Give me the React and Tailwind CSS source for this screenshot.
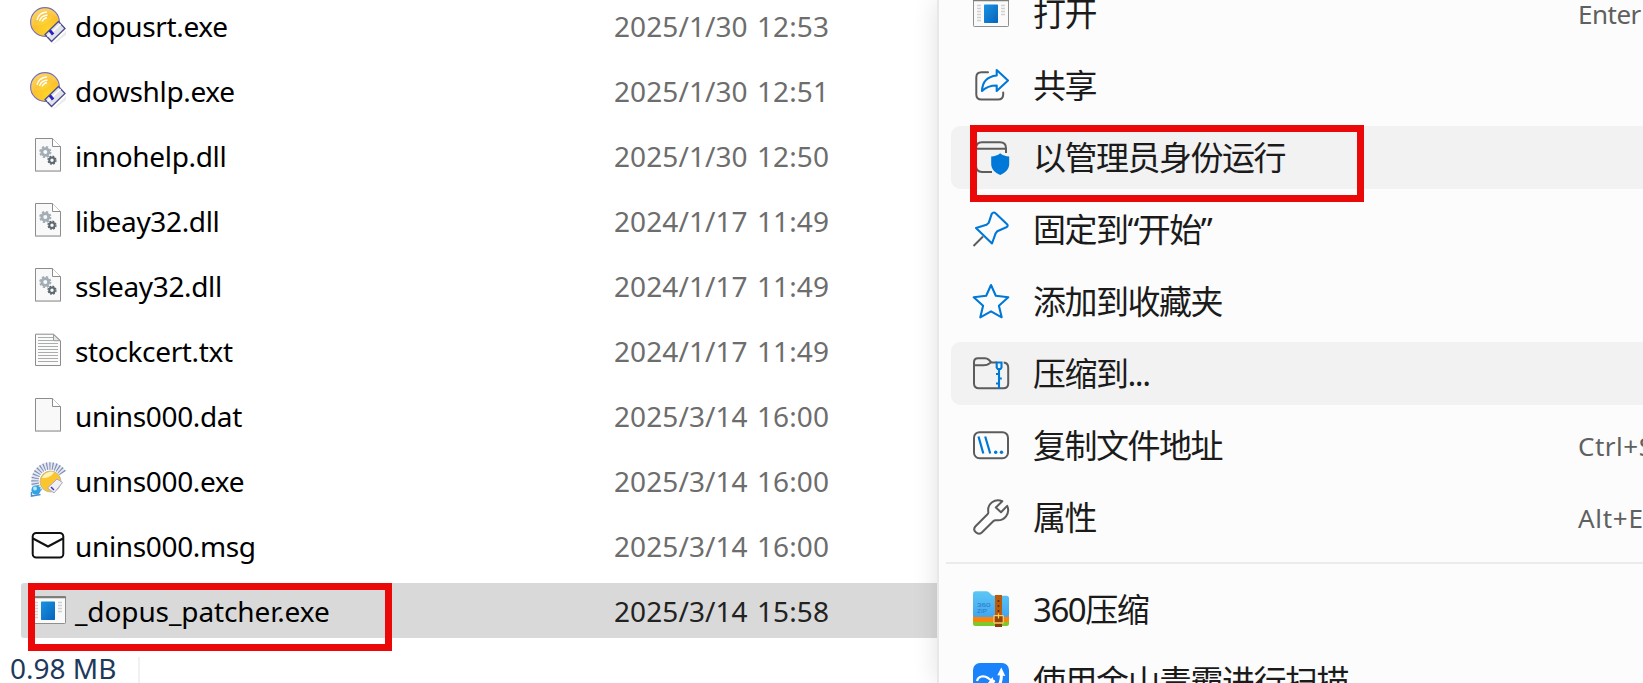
import React from "react";

const Svg = ({ children, className = "" }) => (
  <svg
    viewBox="0 0 36 36"
    fill="none"
    className={`w-9 h-9 shrink-0 overflow-visible ${className}`}
  >
    {children}
  </svg>
);

const DopusIcon = () => (
  <Svg>
    <defs>
      <radialGradient id="gold" cx="0.6" cy="0.75" r="0.8">
        <stop offset="0" stopColor="#ffe52e" />
        <stop offset="0.6" stopColor="#fbc53a" />
        <stop offset="1" stopColor="#fbd772" />
      </radialGradient>
    </defs>
    <path d="M16 30l8 6 12-12v4l-12 9z" fill="#000" opacity="0.08" />
    <circle cx="15" cy="15" r="14.4" fill="url(#gold)" stroke="#7670b4" strokeWidth="1.1" />
    <path d="M1.5 18C8 20 17 17 22 11c3-3 5-2 6-1 1 11-5 18-13 18.500C8 28 3 24 1.500 18z" fill="#f9b61c" opacity="0.35" />
    <path d="M7 13c1-5 5-7.500 10-8M9.500 14c1-4 4-5.500 8-6M12 14.500c1-2 2.500-3.500 5-4" stroke="#fff" strokeWidth="1.3" />
    <path d="M28.500 14.500l6.500 7L21.500 34.500l-6.500-7z" fill="#e3e3ea" stroke="#4b4a91" strokeWidth="1.300" />
    <path d="M30.500 17l-13 12.500" stroke="#fff" strokeWidth="1.500" />
    <path d="M18.700 24.200l2.200-1.700 3.400 4-2.400 2z" fill="#2a22c4" />
  </Svg>
);

const Page = ({ children }) => (
  <Svg>
    <path d="M5.500 1.500h17l8 8V34h-25z" fill="#f9f9f9" stroke="#8c8c8c" />
    <path d="M22.500 1.500v8h8" fill="#fff" stroke="#8c8c8c" />
    <path d="M5 34.300h26" stroke="#b8b8b8" />
    {children}
  </Svg>
);

const DllIcon = () => (
  <Page>
    <circle cx="15.300" cy="15" r="3.400" stroke="#a3adb6" strokeWidth="2.800" />
    <circle cx="15.300" cy="15" r="5.200" stroke="#a3adb6" strokeWidth="1.800" strokeDasharray="2.300 1.784" />
    <circle cx="22" cy="23.200" r="2.700" stroke="#5d6870" strokeWidth="2" />
    <circle cx="22" cy="23.200" r="4" stroke="#5d6870" strokeWidth="1.300" strokeDasharray="1.800 1.342" />
  </Page>
);

const TxtIcon = () => (
  <Svg>
    <path d="M5.500 2.200h18l7 6.500v24.800h-25z" fill="#fbfbfb" stroke="#8c8c8c" />
    <path d="M8 5.500h15M8 8.500h15M8 11.500h20M8 14.500h20M8 17.500h20M8 20.500h20M8 23.500h20M8 26.500h20M8 29.500h20" stroke="#a9adad" strokeWidth="1.100" />
    <path d="M23.500 2.500v6.200h6.500z" fill="#e6e6e6" stroke="#9a9a9a" />
  </Svg>
);

const UninsIcon = () => (
  <Svg>
    <defs>
      <clipPath id="fan">
        <path d="M0 0h36v9L22 19 6 34H0z" />
      </clipPath>
    </defs>
    <g clipPath="url(#fan)">
      <circle cx="20" cy="19" r="15" stroke="#e4e8f2" strokeWidth="7.500" />
      <circle cx="20" cy="19" r="15" stroke="#7f8db3" strokeWidth="7.500" strokeDasharray="1.100 1.800" />
    </g>
    <circle cx="20.500" cy="19.500" r="10.500" fill="#fbc52f" stroke="#b5ad9b" strokeWidth="0.800" />
    <path d="M12 16c2-5 7-7 12-6-2 4-6 6-12 6z" fill="#fff2bd" />
    <path d="M27 17l5.500 3.500L24 31l-6.500-5z" fill="#f1f1f5" stroke="#a9a8c2" />
    <path d="M21 25l3 3" stroke="#3a36bb" strokeWidth="1.500" />
    <circle cx="6" cy="28" r="4.600" fill="#32a4e4" />
    <circle cx="5" cy="26.500" r="1.900" fill="#b9e9ff" />
    <path d="M1.500 30v4l9-1.500" stroke="#4a8fd0" strokeWidth="1.500" />
  </Svg>
);

const MailIcon = () => (
  <Svg>
    <rect x="2.700" y="6" width="30.600" height="24.500" rx="3.500" stroke="#111" strokeWidth="2" />
    <path d="M3 11.500l15 8 15-8" stroke="#111" strokeWidth="2" />
  </Svg>
);

const AppIcon = () => (
  <Svg>
    <defs>
      <linearGradient id="app" x1="0" y1="0" x2="1" y2="1">
        <stop offset="0" stopColor="#1a93e3" />
        <stop offset="1" stopColor="#0763bb" />
      </linearGradient>
    </defs>
    <rect x="0.500" y="4.500" width="35" height="27" rx="0.800" fill="#fafafa" stroke="#8f8f8f" />
    <path d="M0 5.300h36" stroke="#7d7d78" strokeWidth="2" />
    <path d="M4 10.500h4M4 13.500h4M4 16.500h4M4 19.500h4M4 22.500h4M4 25.500h4M28 10.500h4M28 13.500h4M28 16.500h4M28 19.500h4" stroke="#d0d0d0" strokeWidth="1.500" />
    <rect x="11" y="9.500" width="14" height="18.500" rx="0.700" fill="url(#app)" />
  </Svg>
);

const ShareIcon = () => (
  <Svg>
    <path d="M15 5.300H8.500Q3.300 5.300 3.300 10.500v17q0 5 5.200 5h16.500q5.200 0 5.200-5V25.500" stroke="#5c5c5c" strokeWidth="2" strokeLinecap="round" />
    <path d="M23.700 3L35 13.500 23.700 24v-5.500C17 18.500 13 20 9 24c.3-9 5.500-14.500 14.700-15.500z" stroke="#0078d7" strokeWidth="2.100" strokeLinejoin="round" />
  </Svg>
);

const AdminIcon = () => (
  <Svg>
    <path d="M19 33H9q-6-.3-6-6V9.500Q3 3.300 9 3.300h18q6 0 6 6V14M3 9.700h30" stroke="#5c5c5c" strokeWidth="2" />
    <path d="M27.200 14.300c2.500 2.200 5.500 3 9 3.200v7.500c0 5-3.500 8.700-9 11-5.500-2.300-9-6-9-11v-7.500c3.500-.2 6.500-1 9-3.200z" fill="#0078d7" />
  </Svg>
);

const PinIcon = () => (
  <Svg>
    <path d="M10 25.500L.5 35" stroke="#5c5c5c" strokeWidth="2" />
    <path d="M18.800 2.700q2-2.200 4-.2l11 10.500q2 2-.5 3.200l-9 4-1.800 2.500L19 32.500 3 17l10.500-3.300 2.300-2z" stroke="#0078d7" strokeWidth="2.100" strokeLinejoin="round" />
  </Svg>
);

const StarIcon = () => (
  <Svg>
    <path d="M18 2l4.800 10.800 12.500 1.500-9.400 8.500 2.800 11.500L18 28.300 7.300 34.300l2.800-11.500L.7 14.300l12.500-1.500z" stroke="#0078d7" strokeWidth="2.100" strokeLinejoin="round" />
  </Svg>
);

const ZipIcon = () => (
  <Svg>
    <path d="M24 7.500h-5.500l-3-3q-1.500-1.300-3.500-1.300H5Q1 3.200 1 7.200V28.500q0 4.800 5 4.800h24.500q4.700 0 4.700-4.800V12.500q0-4.500-4.500-5M1 10.300h9.500c3 0 4.500-.5 5.500-1.500l2-1.500" stroke="#5c5c5c" strokeWidth="2" />
    <path d="M23.700 7.500v5l1 1.500h2.800l1-1.500v-5zM26 14v20M26 19h-3M26 23.500h2.800M26 28.500h-3" stroke="#0078d7" strokeWidth="2.100" />
  </Svg>
);

const PathIcon = () => (
  <Svg>
    <rect x="1" y="5.200" width="34" height="26" rx="5.500" stroke="#5c5c5c" strokeWidth="2" />
    <path d="M5.500 9.500l4.800 17M12.200 9.500l5 17" stroke="#0078d7" strokeWidth="2.200" />
    <circle cx="22.700" cy="25.300" r="1.700" fill="#0078d7" />
    <circle cx="28.500" cy="25.300" r="1.700" fill="#0078d7" />
  </Svg>
);

const WrenchIcon = () => (
  <Svg>
    <path d="M29.300 2.200C22-1 14 4.500 15.300 13q.2 1.300-.8 2.300L2.300 27.500c-3.300 4 2.500 9.500 6.500 6L20.500 22q1-1 2.500-.8C31.500 22.300 37.500 14.500 34.200 6.900L28 13.200 22.800 8.500z" stroke="#5c5c5c" strokeWidth="2" strokeLinejoin="round" />
  </Svg>
);

const Zip360Icon = () => (
  <Svg>
    <defs>
      <linearGradient id="folder" x1="0" y1="0" x2="0" y2="1">
        <stop offset="0" stopColor="#5cc7f5" />
        <stop offset="1" stopColor="#42a5f0" />
      </linearGradient>
    </defs>
    <path d="M0 28h36v4.500q0 2.500-2.500 2.500h-31Q0 35 0 32.500z" fill="#7bc92b" />
    <path d="M0 22h36v6.500q0 2.500-2.500 2.500h-31Q0 31 0 28.500z" fill="#ff8208" />
    <path d="M0 3Q0 .3 2.700.3h10.500q1.800 0 3 1.300l2 2q1.300 1.200 3 1.200H33.500Q36 4.800 36 7.300V23.500q0 2.500-2.500 2.500h-31Q0 26 0 23.500z" fill="url(#folder)" />
    <text x="4" y="16.300" fontSize="5.800" textLength="13.500" lengthAdjust="spacingAndGlyphs" fill="#2578c4" className="font-['Liberation_Sans']">360</text>
    <text x="4" y="22" fontSize="5.300" textLength="10" lengthAdjust="spacingAndGlyphs" fill="#2578c4" className="font-['Liberation_Sans']">ZIP</text>
    <path d="M22 4h7v32h-7z" fill="#b95b0b" />
    <path d="M22 31h7v5h-7z" fill="#8c3c06" />
    <circle cx="25.500" cy="10" r="1" fill="#5c2b05" />
    <circle cx="25.500" cy="15" r="1" fill="#5c2b05" />
    <circle cx="25.500" cy="20" r="1" fill="#5c2b05" />
    <rect x="21" y="24.700" width="9.300" height="7.300" rx="0.500" fill="#8e4509" stroke="#ffc86a" strokeWidth="1.300" />
    <path d="M25.500 22.500v5" stroke="#ffd54c" strokeWidth="1.200" />
  </Svg>
);

const DubaIcon = () => (
  <Svg>
    <rect width="36" height="36" rx="7" fill="#1a82fb" />
    <path d="M28.300 4.500l4 8.500-8-.8z" fill="#fff" />
    <path d="M28.500 11c0 5-.5 9-3 12" stroke="#fff" strokeWidth="3" />
    <path d="M4 18c1-5 7-6 11-3 3 2 4 4 7 3" stroke="#fff" strokeWidth="2.200" />
    <path d="M15 20h6.500l-2-6z" fill="#fff" />
  </Svg>
);

const files = [
  { name: "dopusrt.exe", date: "2025/1/30 12:53", icon: DopusIcon },
  { name: "dowshlp.exe", date: "2025/1/30 12:51", icon: DopusIcon },
  { name: "innohelp.dll", date: "2025/1/30 12:50", icon: DllIcon },
  { name: "libeay32.dll", date: "2024/1/17 11:49", icon: DllIcon },
  { name: "ssleay32.dll", date: "2024/1/17 11:49", icon: DllIcon },
  { name: "stockcert.txt", date: "2024/1/17 11:49", icon: TxtIcon },
  { name: "unins000.dat", date: "2025/3/14 16:00", icon: Page },
  { name: "unins000.exe", date: "2025/3/14 16:00", icon: UninsIcon },
  { name: "unins000.msg", date: "2025/3/14 16:00", icon: MailIcon },
  { name: "_dopus_patcher.exe", date: "2025/3/14 15:58", icon: AppIcon, selected: true },
];

const menu = [
  { label: "打开", icon: AppIcon, shortcut: "Enter", spacing: "tracking-[-0.5px]" },
  { label: "共享", icon: ShareIcon },
  { label: "以管理员身份运行", icon: AdminIcon, active: true, marked: true },
  { label: "固定到“开始”", icon: PinIcon },
  { label: "添加到收藏夹", icon: StarIcon },
  { label: "压缩到...", icon: ZipIcon, active: true },
  { label: "复制文件地址", icon: PathIcon, shortcut: "Ctrl+Shift+C", spacing: "tracking-[0.5px]" },
  { label: "属性", icon: WrenchIcon, shortcut: "Alt+Enter", spacing: "tracking-[0.7px]" },
  { divider: true },
  { label: "360压缩", icon: Zip360Icon },
  { label: "使用金山毒霸进行扫描", icon: DubaIcon },
];

const FileRow = ({ file }) => {
  const Icon = file.icon;
  return (
    <div
      className={`relative flex h-[55px] shrink-0 rounded-l-[3px] pl-[9px] ${
        file.selected ? "bg-[#d9d9d9]" : ""
      }`}
    >
      <div className="pt-[9px]">
        <Icon />
      </div>
      <span
        className={`ml-[9px] w-[539px] whitespace-nowrap leading-[57px] text-black ${
          file.selected ? "tracking-[-0.1px]" : "tracking-[-0.35px]"
        }`}
      >
        {file.name}
      </span>
      <span
        className={`whitespace-nowrap leading-[57px] tracking-[0.08px] [word-spacing:2px] ${
          file.selected ? "text-[#222]" : "text-[#6d6d6d]"
        }`}
      >
        {file.date}
      </span>
      {file.selected && (
        <div className="absolute left-[7px] top-0 h-[68px] w-[364px] border-[7px] border-[#ea0808]" />
      )}
    </div>
  );
};

const MenuRow = ({ item }) => {
  if (item.divider) {
    return <div className="-ml-[5px] mt-[4px] mb-[5px] h-[2px] shrink-0 bg-[#ebebeb]" />;
  }
  const Icon = item.icon;
  return (
    <div
      className={`relative flex h-[63px] shrink-0 rounded-l-[9px] pl-[22px] ${
        item.active ? "bg-[#f2f2f2]" : ""
      }`}
    >
      <div className="pt-[13px]">
        <Icon />
      </div>
      <span className="ml-[24px] w-[545px] shrink-0 whitespace-nowrap text-[33px] leading-[63px] tracking-[-1.5px] text-[#1b1b1b]">
        {item.label}
      </span>
      {item.shortcut && (
        <span className={`whitespace-nowrap text-[26px] leading-[65px] text-[#606060] ${item.spacing}`}>
          {item.shortcut}
        </span>
      )}
      {item.marked && (
        <div className="absolute left-[19px] -top-px h-[77px] w-[394px] border-[7px] border-[#ea0808]" />
      )}
    </div>
  );
};

const App = () => {
  return (
    <div className="flex h-[683px] w-[1643px] overflow-hidden bg-white font-['Noto_Sans','Noto_Sans_CJK_SC',sans-serif] text-[28px]">
      <div className="flex w-[937px] shrink-0 flex-col">
        <div className="-mt-[2px] ml-[21px] flex flex-col gap-[10px]">
          {files.map((file) => (
            <FileRow key={file.name} file={file} />
          ))}
        </div>
        <div className="mt-[19px] flex h-[26px] pl-[10px]">
          <span className="w-[128px] whitespace-nowrap leading-[23px] text-[#1e395b]">
            0.98 MB
          </span>
          <div className="h-full w-[2px] bg-[#f1f1f1]" />
        </div>
      </div>

      {/* context menu */}
      <div className="relative z-10 h-[683px] w-[706px] shrink-0 border-l-2 border-[#e8e8e8] bg-[#fcfcfc] pl-[12px] shadow-[0_0_24px_rgba(0,0,0,0.12)]">
        <div className="-mt-[18px] flex flex-col gap-[9px]">
          {menu.map((item, i) => (
            <MenuRow key={i} item={item} />
          ))}
        </div>
      </div>
    </div>
  );
};

export default App;
